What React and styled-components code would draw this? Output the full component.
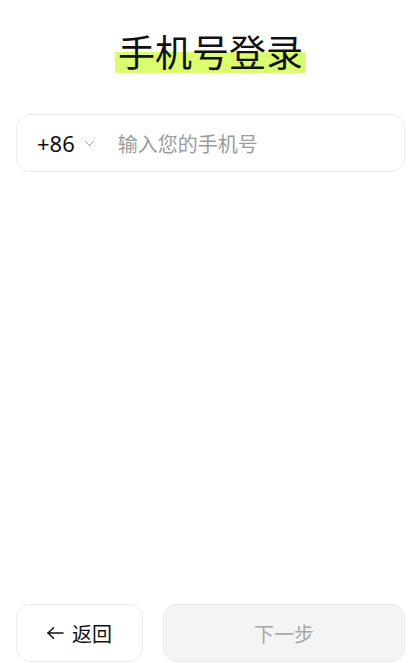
import React, { useState } from "react";
import styled, { createGlobalStyle } from "styled-components";
import { ChevronDown } from "lucide-react";

const GlobalStyle = createGlobalStyle`
  html, body {
    margin: 0;
    padding: 0;
    background: #fff;
  }
  body {
    font-family: "Noto Sans", "Noto Sans CJK SC", sans-serif;
    color: #111;
  }
`;

// thin left arrow, wider than it is tall like the reference
const BackArrow = () => (
  <svg width="17" height="12" viewBox="0 0 17 12" fill="none" stroke="currentColor" strokeWidth="1.5" strokeLinecap="round" strokeLinejoin="round">
    <path d="M16 6H1" />
    <path d="M6.5 0.8L1 6l5.5 5.2" />
  </svg>
);

function App() {
  const [phone, setPhone] = useState("");

  return (
    <Page>
      <GlobalStyle />
      <Main>
        <Title>
          <Marked>手机号登录</Marked>
        </Title>
        <PhoneField>
          <CountryCode>
            +86
            <ChevronDown size={17} strokeWidth={1.3} color="#9e9e9e" />
          </CountryCode>
          <PhoneInput
            value={phone}
            onChange={(e) => setPhone(e.target.value)}
            placeholder="输入您的手机号"
          />
        </PhoneField>
      </Main>
      <Footer>
        <BackButton>
          <BackArrow />
          返回
        </BackButton>
        <NextButton disabled={!phone}>下一步</NextButton>
      </Footer>
    </Page>
  );
}

const Page = styled.div`
  display: flex;
  flex-direction: column;
  min-height: 100vh;
  box-sizing: border-box;
  padding: 0 15px 1px 16px;
`;

const Main = styled.div`
  flex: 1;
  display: flex;
  flex-direction: column;
`;

const Title = styled.h1`
  margin: 26px 0 0;
  text-align: center;
  font-family: "Noto Sans CJK SC", sans-serif;
  font-size: 37px;
  font-weight: 400;
  line-height: 50px;
  color: #111;
`;

const Marked = styled.span`
  position: relative;
  display: inline-block;
  padding: 0 3px;
  z-index: 0;

  &::before {
    content: "";
    position: absolute;
    left: 0;
    right: 0;
    bottom: 3px;
    height: 21px;
    background: #dbfc6e;
    z-index: -1;
  }
`;

const PhoneField = styled.div`
  margin-top: 38px;
  height: 58px;
  box-sizing: border-box;
  border: 1px solid #ececec;
  border-radius: 14px;
  display: flex;
  align-items: center;
  padding-left: 20px;
`;

const CountryCode = styled.div`
  display: flex;
  align-items: center;
  gap: 6px;
  font-size: 22px;
  color: #111;
  margin-right: 20px;
`;

const PhoneInput = styled.input`
  flex: 1;
  min-width: 0;
  border: none;
  outline: none;
  background: transparent;
  font-family: "Noto Sans CJK SC", sans-serif;
  font-size: 20px;
  color: #111;
  padding: 0;

  &::placeholder {
    color: #9b9b9b;
  }
`;

const Footer = styled.div`
  display: flex;
  gap: 20px;
  height: 58px;
`;

const BaseButton = styled.button`
  height: 58px;
  box-sizing: border-box;
  border-radius: 14px;
  border: 1px solid #ececec;
  display: flex;
  align-items: center;
  justify-content: center;
  font-family: "Noto Sans CJK SC", sans-serif;
  font-size: 20px;
  cursor: pointer;
`;

const BackButton = styled(BaseButton)`
  width: 127px;
  flex-shrink: 0;
  background: #fff;
  color: #111;
  gap: 8px;
`;

const NextButton = styled(BaseButton)`
  flex: 1;
  background: #f4f4f4;
  color: #a8a8a8;
  &:disabled {
    cursor: default;
  }
`;

export default App;
